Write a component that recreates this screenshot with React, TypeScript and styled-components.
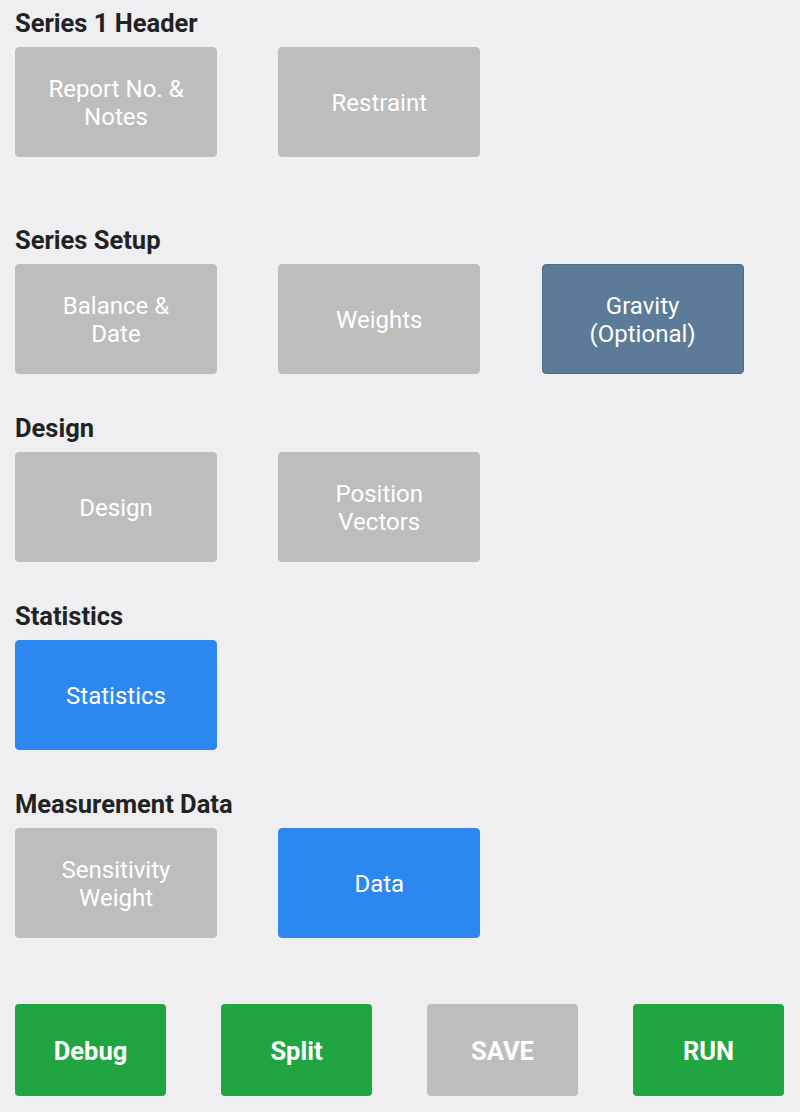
import React from 'react';
import styled, { createGlobalStyle } from 'styled-components';

const GlobalStyle = createGlobalStyle`
body {
  margin: 0;
  background-color: #efeff1;
  font-family: Roboto, "Liberation Sans", Arial, sans-serif;
}
`
const Page = styled.div`
  padding: 8px 15px 0 15px;
  display: flex;
  flex-direction: column;
`
const Section = styled.section<{space: number}>`
  display: flex;
  flex-direction: column;
  margin-bottom: ${({space}) => space}px;
`
const Heading = styled.h2`
  margin: 0 0 9px 0;
  font-size: 25.5px;
  line-height: 30px;
  font-weight: 700;
  color: #222222;
`
const ButtonRow = styled.div`
  display: grid;
  grid-template-columns: repeat(3, 202px);
  column-gap: 61.3px;
`
const colours = {
  grey: '#bdbdbd',
  slate: '#5c7b98',
  blue: '#2d87f1',
  green: '#21a540',
};
type Tone = keyof typeof colours;

const NavButton = styled.button<{tone: Tone}>`
  height: 110px;
  border: 1px solid ${({tone}) => (tone === 'slate' ? '#4f6d89' : colours[tone])};
  border-radius: 4px;
  background-color: ${({tone}) => colours[tone]};
  color: #ffffff;
  font-family: inherit;
  font-size: 24px;
  line-height: 28px;
  padding: 2px 6px 0 6px;
  text-align: center;
  cursor: pointer;
`
const ActionRow = styled.div`
  display: grid;
  grid-template-columns: repeat(4, 151px);
  column-gap: 55px;
  margin-top: 66px;
`
const ActionButton = styled.button<{tone: Tone}>`
  height: 92px;
  border: none;
  border-radius: 4px;
  background-color: ${({tone}) => colours[tone]};
  color: #ffffff;
  font-family: inherit;
  font-size: 25.5px;
  font-weight: 700;
  padding-top: 2px;
  cursor: pointer;
`

const sections: { title: string; space: number; buttons: { label: string[]; tone: Tone }[] }[] = [
  { title: 'Series 1 Header', space: 68, buttons: [
    { label: ['Report No. &', 'Notes'], tone: 'grey' },
    { label: ['Restraint'], tone: 'grey' },
  ]},
  { title: 'Series Setup', space: 39, buttons: [
    { label: ['Balance &', 'Date'], tone: 'grey' },
    { label: ['Weights'], tone: 'grey' },
    { label: ['Gravity', '(Optional)'], tone: 'slate' },
  ]},
  { title: 'Design', space: 39, buttons: [
    { label: ['Design'], tone: 'grey' },
    { label: ['Position', 'Vectors'], tone: 'grey' },
  ]},
  { title: 'Statistics', space: 39, buttons: [
    { label: ['Statistics'], tone: 'blue' },
  ]},
  { title: 'Measurement Data', space: 0, buttons: [
    { label: ['Sensitivity', 'Weight'], tone: 'grey' },
    { label: ['Data'], tone: 'blue' },
  ]},
];

const App = () => {
  return (
    <>
      <GlobalStyle />
      <Page>
        {sections.map((s) => (
          <Section key={s.title} space={s.space}>
            <Heading>{s.title}</Heading>
            <ButtonRow>
              {s.buttons.map((b) => (
                <NavButton key={b.label.join(' ')} tone={b.tone}>
                  {b.label.map((line, i) => (
                    <React.Fragment key={line}>{i > 0 && <br />}{line}</React.Fragment>
                  ))}
                </NavButton>
              ))}
            </ButtonRow>
          </Section>
        ))}
        <ActionRow>
          <ActionButton tone="green">Debug</ActionButton>
          <ActionButton tone="green">Split</ActionButton>
          <ActionButton tone="grey">SAVE</ActionButton>
          <ActionButton tone="green">RUN</ActionButton>
        </ActionRow>
      </Page>
    </>
  )
}

export default App;
